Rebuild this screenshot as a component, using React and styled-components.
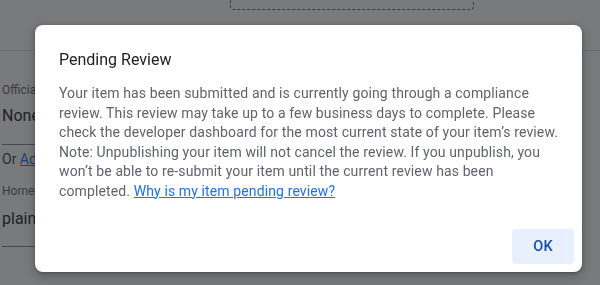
import styled, { createGlobalStyle } from "styled-components";

const GlobalStyle = createGlobalStyle`
  * {
    box-sizing: border-box;
  }

  body {
    margin: 0;
    font-family: Roboto, "Liberation Sans", sans-serif;
    -webkit-font-smoothing: antialiased;
  }
`;

const Page = styled.div`
  width: 600px;
  height: 285px;
  overflow: hidden;
  background: #fff;
  position: relative;
`;

const DropZone = styled.div`
  width: 244px;
  height: 40px;
  margin: -30px 0 0 230px;
  border: 1px dashed #5f6368;
  border-radius: 4px;
`;

const Divider = styled.hr`
  margin: 40px 0 0;
  border: 0;
  border-top: 1px solid #dadce0;
`;

const Form = styled.div`
  display: flex;
  flex-direction: column;
  padding: 0 2px;
`;

const FieldLabel = styled.div`
  font-size: 12px;
  line-height: 16px;
  color: #5f6368;
  margin-top: ${(p) => p.$top}px;
`;

const FieldValue = styled.div`
  width: 320px;
  font-size: 16px;
  line-height: 24px;
  color: #202124;
  padding: ${(p) => p.$pad};
  border-bottom: 1px solid #80868b;
`;

const HelperRow = styled.div`
  margin-top: 4px;
  font-size: 14px;
  line-height: 20px;
  color: #3c4043;

  a {
    color: #1a73e8;
  }
`;

const Backdrop = styled.div`
  position: fixed;
  inset: 0;
  background: rgba(32, 33, 36, 0.6);
  padding: 25px 0 0 35px;
`;

const Dialog = styled.div`
  width: 547px;
  height: 247px;
  background: #fff;
  border-radius: 8px;
  box-shadow: 0 4px 8px 3px rgba(0, 0, 0, 0.15), 0 1px 3px rgba(0, 0, 0, 0.3);
  display: flex;
  flex-direction: column;
`;

const Title = styled.h2`
  margin: 0;
  padding: 23px 24px 0;
  font-size: 16px;
  line-height: 24px;
  font-weight: 400;
  color: #202124;
`;

const Body = styled.p`
  margin: 0;
  padding: 12px 6px 0 24px;
  font-size: 14px;
  line-height: 19.5px;
  letter-spacing: 0.12px;
  color: #5f6368;

  a {
    color: #1a73e8;
  }
`;

const Actions = styled.div`
  margin-top: auto;
  display: flex;
  justify-content: flex-end;
  padding: 8px;
`;

const Button = styled.button`
  height: 35px;
  min-width: 62px;
  padding: 0 20px;
  border: 0;
  border-radius: 4px;
  background: #e8f0fe;
  color: #174ea6;
  font-family: Roboto, "Liberation Sans", sans-serif;
  font-size: 14.5px;
  font-weight: 500;
  letter-spacing: 0.25px;
`;

export default function App() {
  return (
    <Page>
      <GlobalStyle />
      <DropZone />
      <Divider />
      <Form>
        <FieldLabel $top={31}>Official URL</FieldLabel>
        <FieldValue $pad="6px 0 16px">None</FieldValue>
        <HelperRow>
          Or <a href="#">Add a new site</a>
        </HelperRow>
        <FieldLabel $top={14}>Homepage URL</FieldLabel>
        <FieldValue $pad="8px 0 15px">plain</FieldValue>
      </Form>
      <Backdrop>
        <Dialog>
          <Title>Pending Review</Title>
          <Body>
            Your item has been submitted and is currently going through a
            compliance
            <br />
            review. This review may take up to a few business days to complete.
            Please
            <br />
            check the developer dashboard for the most current state of your
            item’s review.
            <br />
            Note: Unpublishing your item will not cancel the review. If you
            unpublish, you
            <br />
            won’t be able to re-submit your item until the current review has
            been
            <br />
            completed. <a href="#">Why is my item pending review?</a>
          </Body>
          <Actions>
            <Button>OK</Button>
          </Actions>
        </Dialog>
      </Backdrop>
    </Page>
  );
}
